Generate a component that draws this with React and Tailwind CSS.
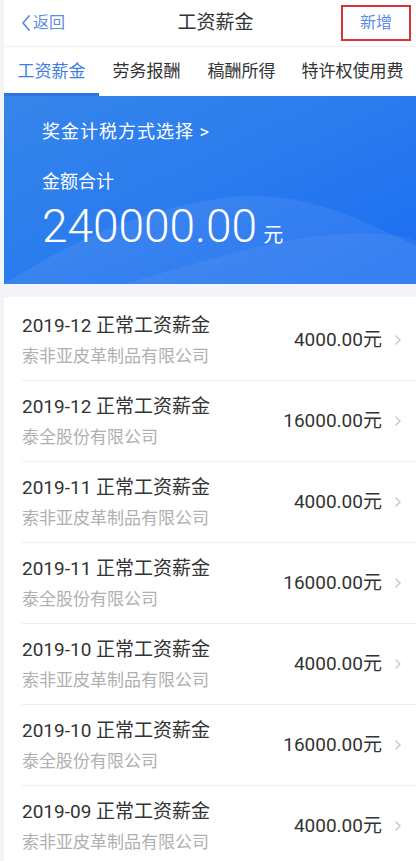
const rows = [
  { title: '2019-12 正常工资薪金', company: '索非亚皮革制品有限公司', amount: '4000.00' },
  { title: '2019-12 正常工资薪金', company: '泰全股份有限公司', amount: '16000.00' },
  { title: '2019-11 正常工资薪金', company: '索非亚皮革制品有限公司', amount: '4000.00' },
  { title: '2019-11 正常工资薪金', company: '泰全股份有限公司', amount: '16000.00' },
  { title: '2019-10 正常工资薪金', company: '索非亚皮革制品有限公司', amount: '4000.00' },
  { title: '2019-10 正常工资薪金', company: '泰全股份有限公司', amount: '16000.00' },
  { title: '2019-09 正常工资薪金', company: '索非亚皮革制品有限公司', amount: '4000.00' },
]

const tabs = ['工资薪金', '劳务报酬', '稿酬所得', '特许权使用费']

const font = { fontFamily: 'Roboto, "Noto Sans CJK SC", sans-serif' }

const App = () => {
  return (
    <div
      className="w-[416px] h-[861px] overflow-hidden bg-white border-l-4 border-[#f3f4f6]"
      style={font}
    >
      <header className="h-[47px] flex items-center justify-between border-b border-[#f0f0f0] pl-[16px] pr-[5px]">
        <div className="flex items-center w-[120px] text-[16px] text-[#5a8ee0]">
          <svg width="12" height="18" viewBox="0 0 12 18" className="mr-[1px]">
            <path d="M9 2 L3 9 L9 16" fill="none" stroke="#5a8ee0" strokeWidth="1.8" strokeLinecap="round" strokeLinejoin="round" />
          </svg>
          返回
        </div>
        <h1 className="text-[19px] text-[#333]">工资薪金</h1>
        <div className="w-[120px] flex justify-end">
          <button className="w-[70px] h-[36px] border-2 border-[#d8323c] text-[16px] text-[#5a8ee0] flex items-center justify-center">
            新增
          </button>
        </div>
      </header>

      <nav className="flex h-[49px]">
        {tabs.map((t, i) => (
          <div
            key={t}
            className={
              i === 3
                ? 'flex-1 flex items-center justify-center text-[17px] text-[#333]'
                : i === 0
                ? 'w-[95px] flex items-center justify-center text-[17px] text-[#3d7fe0] border-b-[3px] border-[#2f74e0] pt-[3px]'
                : 'w-[95px] flex items-center justify-center text-[17px] text-[#333]'
            }
          >
            {t}
          </div>
        ))}
      </nav>

      <section className="relative h-[188px] bg-gradient-to-br from-[#3585ea] via-[#2a7bee] to-[#1a6cf2] overflow-hidden text-white pl-[38px] pt-[24px]">
        <svg className="absolute inset-0" width="412" height="188" viewBox="0 0 412 188" preserveAspectRatio="none">
          <path d="M0 188 C60 150 120 120 200 105 C280 90 330 110 412 150 L412 188 Z" fill="#ffffff" fillOpacity="0.07" />
          <path d="M120 188 C200 165 280 140 340 138 C380 136 400 140 412 145 L412 188 Z" fill="#ffffff" fillOpacity="0.06" />
        </svg>
        <div className="relative">
          <p className="text-[18px] leading-[24px] tracking-[1px]">奖金计税方式选择 &gt;</p>
          <p className="text-[18px] leading-[24px] mt-[26px]">金额合计</p>
          <p className="mt-[6px] flex items-baseline">
            <span className="text-[46px] leading-[52px] font-light">240000.00</span>
            <span className="text-[20px] ml-[6px]">元</span>
          </p>
        </div>
      </section>

      <div className="h-[13px] bg-[#f3f4f7]" />

      <ul className="pt-[3px]">
        {rows.map((r, i) => (
          <li key={i} className="pl-[18px]">
            <div className="flex items-center border-b border-[#eeeeee] pt-[13px] pb-[13px] pr-[14px]">
              <div className="flex-1">
                <p className="text-[19px] leading-[26px] text-[#333]">{r.title}</p>
                <p className="text-[17px] leading-[22px] mt-[6px] text-[#b0b0b0]">{r.company}</p>
              </div>
              <span className="text-[19px] text-[#333]">{r.amount}元</span>
              <svg width="8" height="12" viewBox="0 0 8 12" className="ml-[12px]">
                <path d="M2 2 L6 6 L2 10" fill="none" stroke="#c8c8c8" strokeWidth="1.5" strokeLinecap="round" strokeLinejoin="round" />
              </svg>
            </div>
          </li>
        ))}
      </ul>
    </div>
  )
}

export default App
